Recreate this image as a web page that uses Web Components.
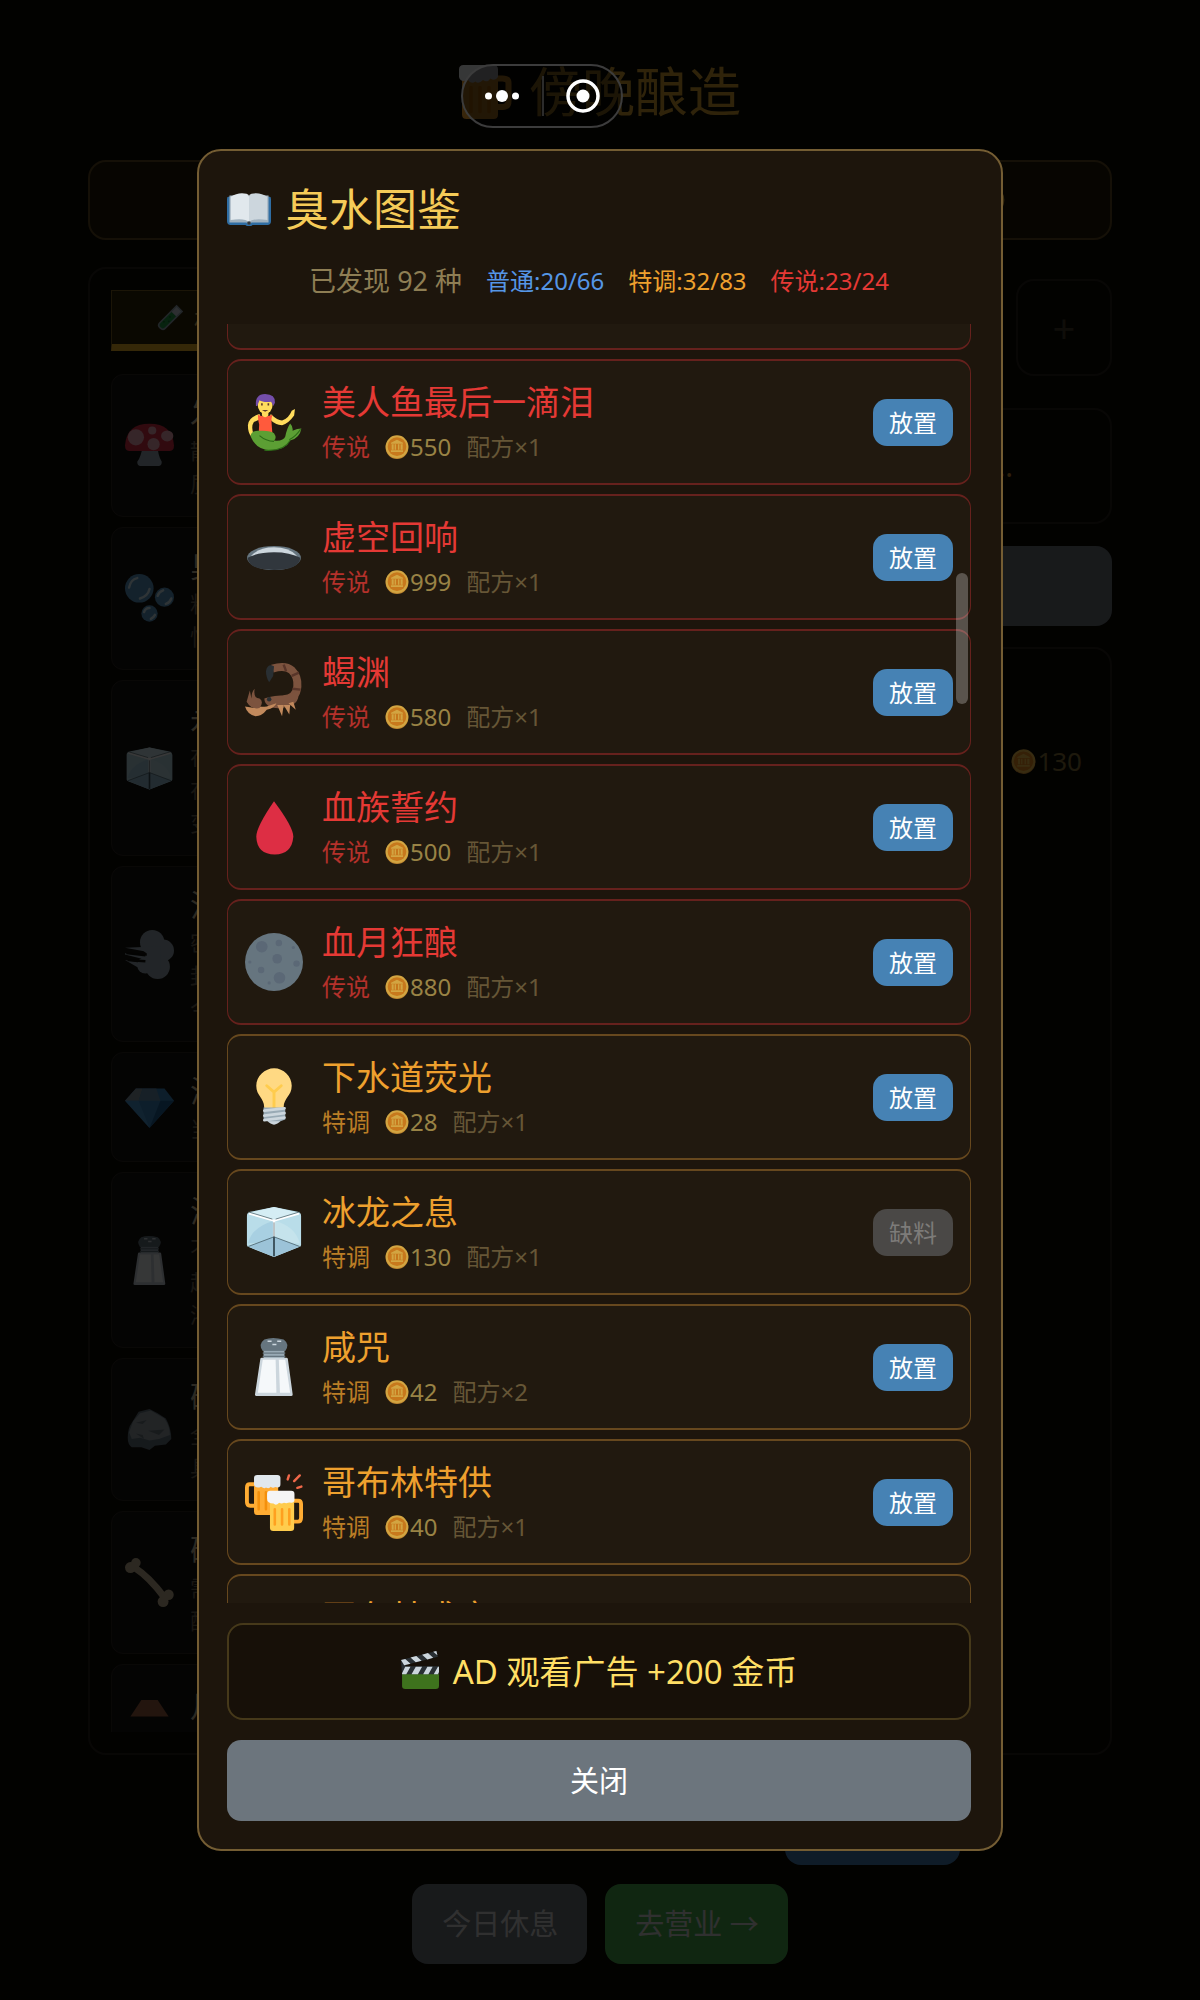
<!DOCTYPE html>
<html lang="zh-CN">
<head>
<meta charset="utf-8">
<meta name="viewport" content="width=device-width, initial-scale=1">
<title>傍晚酿造</title>
<style>
    body {
        margin: 0;
        background: #0c0904;
        color: #fff;
        font-family: "Noto Sans", "Noto Sans CJK SC", sans-serif;
    }
</style>
</head>
<body>
<brew-page></brew-page>
<modal-layer>
    <codex-dialog></codex-dialog>
</modal-layer>
<mini-capsule></mini-capsule>

<script>
// all icons share a 36x36 canvas
const ICONS = {
    book: `
        <path fill="#2f6da3" d="M1 8q-1 0-1 2v18q0 3 3 3h12q1 1 3 1t3-1h12q3 0 3-3V10q0-2-1-2z"/>
        <path fill="#9fb0bd" d="M2 7h32v22H20l-2 2-2-2H2z"/>
        <path fill="#e1e8ed" d="M3 8Q9 4 16 5.500 18 6 18 8v21q-3-4-15-2z"/>
        <path fill="#ccd6dd" d="M33 8Q27 4 20 5.500 18 6 18 8v21q3-4 15-2z"/>
        <circle fill="#31373d" cx="18" cy="29.500" r="1.500"/>`,
    coin: `
        <ellipse fill="#e8a33a" cx="18" cy="19" rx="17" ry="17"/>
        <ellipse fill="#ffc94f" cx="18" cy="17.500" rx="17" ry="17"/>
        <ellipse fill="#f19020" cx="18" cy="17.500" rx="14" ry="14"/>
        <path fill="#ffc94f" d="M18 7l9 4.500V13H9v-1.500zM10 14h3v8h-3zM14.500 14h2v8h-2zM19.500 14h2v8h-2zM23.500 14h3v8h-3zM9 23h18v2.500H9z"/>`,
    mermaid: `
        <path fill="#ffdc5d" d="M9 13Q2 15 1.800 20 1.800 25 4 27l1.500-1q-2-5 0-8L10 16zM16 13q4 4 7 4 4-1 6-6l2-1-.5 4Q27 19 23 20q-4 0-8-4z"/>
        <path fill="#ff5a3c" d="M8 13.500q4 2 9 0-1 3-.5 5.500l.5 6H8.500l.3-5.500Q8 17 8 13.500z"/>
        <path fill="#ffdc5d" d="M10.500 10h4v4q-2 2-4 0z"/>
        <ellipse fill="#ffdc5d" cx="12.500" cy="7.500" rx="4.600" ry="5.500"/>
        <path fill="#744eaa" d="M6.800 8Q6 .8 12.500.6 19 .8 18.600 6l-1 2-1.400-2.500Q11 6 9 4.500L7.600 8z"/>
        <path fill="#5d3b28" d="M10 6.300h1v1.500h-1zM14 6.300h1v1.500h-1zM10.500 10.600h4l-2 1z"/>
        <path fill="#5c9f34" d="M3.500 27q0-3.500 4.500-3.500 8-.5 10 1.500 2 3 0 4.500 6 .5 7-2.500Q26 22 28 19q2 2 1.500 4.500 3-1.500 5.500-1.500-1 6-7 7.500-3 6-12 6T3.500 27z"/>
        <path fill="none" stroke="#2d6b18" stroke-width=".7" d="M9 26.500q4 3.500 9 3.500M12 35.500q12 1 16-6M27.500 29q4-2 7-6.500"/>`,
    hole: `
        <ellipse fill="#66757f" cx="18" cy="18.600" rx="16.700" ry="7.500"/>
        <path fill="#ccd6dd" d="M4 17Q9 12 18 12t14 5v2H4z"/>
        <path fill="#31373d" d="M1.700 18.500Q8 15 18 15t16.300 3.500Q34 26 18 26T1.700 18.500z"/>`,
    scorpion: `
        <path fill="none" stroke="#7c533e" stroke-width="5" d="M17 3.500Q25 1 29 4.500q4 4 3.500 10Q32 22 24 22.500"/>
        <path fill="#7c533e" d="M12 22q6-2 14-2l7-3q1 5-2 8-9 5-16 2-3-2-3-5z"/>
        <path stroke="#583529" stroke-width="1.500" d="M24 1l1.500 4M29 8l4.500-2M29.500 16l5 .5"/>
        <path fill="#292f33" d="M13 5q1-5 5-3l-.5 6L15 12q-2-3-2-7z"/>
        <circle fill="#292f33" cx="15" cy="22.500" r="1.400"/>
        <path fill="#c1895c" d="M0 27l6 1q-4-2-4.500-4 5 4 12 3l6-2q-1 3-6 4-3 4-7 4-5-1-6.500-6zM20 26l4 0-1 7zM24 26l4 0-.5 6zM27 25l3-1 1.500 5z"/>
        <path fill="#7c533e" d="M1 24q2-7 2-7l1 5q0-4 2-6-1 6 3 6 3 2 0 6-5 1-8-4z"/>`,
    drop: `<path fill="#dd2e44" d="M18 2q12 16 12 22Q29 35 18.500 35 7.500 35 7 24 7 18 18 2z"/>`,
    moon: `
        <circle fill="#66757f" cx="18" cy="18" r="18"/>
        <g fill="#5b6876"><circle cx="10.400" cy="8.500" r="3.600"/><circle cx="21" cy="6.200" r="2"/><circle cx="30" cy="9" r="1"/>
        <circle cx="20" cy="16" r="3"/><circle cx="32" cy="19" r="2"/><circle cx="3" cy="18" r="1"/><circle cx="10" cy="23" r="2"/>
        <circle cx="21.400" cy="27.800" r="3.600"/><circle cx="15" cy="31" r="1"/></g>`,
    bulb: `
        <path fill="#ffd983" d="M29 11.060c0 6.440-5 7.440-5 13.440 0 3.100-3.120 3.360-5.500 3.360-2.050 0-6.590-.78-6.590-3.360C11.910 18.500 7 17.500 7 11.060 7 5.030 12.280.14 18.080.14 23.880.14 29 5.030 29 11.060z"/>
        <path fill="none" stroke="#ffcc4d" stroke-width="1.800" stroke-linecap="round" d="M13.500 11l4.500 4 4.500-4M18 15v11"/>
        <path fill="#ccd6dd" d="M22.500 32.500Q20 35.200 18 35.200T13.500 32.500z"/>
        <path fill="#99aab5" d="M11.500 24.500h13.500v7.500l-3 1H14l-2.500-1.500z"/>
        <path stroke="#ccd6dd" stroke-width="1.700" stroke-linecap="round" d="M12 26.500l12.500-1.500M12 29.500l12.500-1.500M12 32.300l12.500-1.500"/>`,
    ice: `
        <path fill="#b9dde9" d="M1.200 8q0-2 2-2.500L18 2.500l14.800 3q2 .5 2 2.500v18q0 1-1.500 1.500L18 33.500 2.700 27.500Q1.200 27 1.200 26z"/>
        <path fill="#d5edf4" d="M3 6l15-3.500L33 6 18 10.500z"/>
        <path fill="#a8d0e2" d="M2 25Q4 15 18 11v13z"/>
        <path fill="#c5e3ec" d="M18 11q13 3 16 14L18 24z"/>
        <path fill="#9cc3d8" d="M2 27l16-6 16 6-16 6.500z"/>
        <path fill="none" stroke="#fff" stroke-width="1.300" d="M2.500 6.500L18 11l15.500-4.500M18 11v10"/>
        <path fill="none" stroke="#31474f" stroke-width=".4" d="M2 5.500L17 10M19 10l15-4.500M18 12v9M2 27l16-6 16 6"/>
        <path stroke="#3d535e" stroke-width="1.200" d="M18 21v12"/>`,
    salt: `
        <path fill="#66757f" d="M11 8q-3-4 1-7 5-2 12 0 4 3 1 7z"/>
        <path fill="#ccd6dd" d="M14 1.500h2.500v1H14zM20 1.500h2.500v1H20zM17 3.500h2.500v1H17z"/>
        <path fill="#99aab5" d="M11.500 8h13v4.500h-13z"/><path fill="#66757f" d="M11 9h14v.8H11zM11 11h14v.8H11z"/>
        <path fill="#ccd6dd" d="M9.500 13q0-.8 1-.8h15.200q.8 0 .9.8l3 22q0 1-1 1H7.200q-1 0-1-1z"/>
        <path fill="#f5f8fa" d="M11 13.500h8l.5 20.500H8z"/><path fill="#f5f8fa" d="M21 13.500h4l3 20.500h-6.300z"/>`,
    beers: `
        <path fill="none" stroke="#ffac33" stroke-width="2.400" d="M6 7H3Q1.200 7 1.200 9v9q0 2.300 2 2.300H6"/>
        <path fill="#ffac33" d="M5.600 6h15v20H7.500q-1.900 0-1.900-2z"/>
        <path stroke="#f4900c" stroke-width="1.600" stroke-linecap="round" d="M8.500 12v10.500M13 12v10.500"/>
        <path fill="#e1e8ed" d="M5.600 3q0-1.800 2-1.800h12.500Q22 1.200 22 3v4q0 2-2 2-1-.5-2 0t-2-.5q-1 1.500-3 .5-1 1-3-.5-3 1.500-4.400-1z"/>
        <path fill="none" stroke="#ffac33" stroke-width="2.400" d="M30 17.200h3q1.800 0 1.800 2v8.500q0 2.500-2 2.500H30"/>
        <path fill="#ffcc4d" d="M15.500 16h15v18q0 2-2 2h-11q-2 0-2-2z"/>
        <path stroke="#ffa01f" stroke-width="1.600" stroke-linecap="round" d="M18.500 22.500V32M23 22.500V32M27.500 22.500V32"/>
        <path fill="#f5f5f5" d="M13.700 13q0-2 2-2h13q2 0 2 2v3.500q0 2-2 2-1-.5-2 0t-2.500 0q-1.500 1-3 0-2 2-3.500.5-4 0-4-3z"/>
        <path stroke="#f0684a" stroke-width="1.500" stroke-linecap="round" d="M26.500 4l.8-2.500M30.500 5l3.500-3.500M32.500 9.200l2.500-.8"/>`,
    clapper: `
        <path fill="#3e721d" d="M1 21h35v12q0 3-3 3H4q-3 0-3-3z"/>
        <path fill="#292f33" d="M0 9l5 5.500h31V22H1z"/>
        <path fill="#ccd6dd" d="M4 15h5l-4 7H1v-1zM14 15h6l-4 7h-6zM25 15h5l-4 7h-5zM35 15h1v5l-1 2h-4z"/>
        <path fill="#292f33" d="M0 8.500L33.500 0 35 5.500 1.500 14z"/>
        <path fill="#ccd6dd" d="M0 8.500l4-1L9 12l-6 1.500zM9 6.200l5.500-1.400 5 4.500L14 10.700zM20 3.500L25.500 2l5 4.500L25 8zM30.500.8L33.500 0l1 4z"/>`,
    beer: `
        <path fill="none" stroke="#ffac33" stroke-width="4" d="M24 9h5q4 0 4 3v12q0 4-4 4h-5"/>
        <path fill="#ffac33" d="M2 7h24v26q0 3-3 3H5q-3 0-3-3z"/>
        <path stroke="#f4900c" stroke-width="2.500" stroke-linecap="round" d="M8 15v16M14 15v16M20 15v16"/>
        <path fill="#f5f8fa" d="M0 3q0-3 3-3h20q3 0 3 3v5q-2 3-5 1-2 3-5 1-3 3-5 1-3 2-5-1-5 2-6-2z"/>`,
    tube: `
        <g transform="rotate(45 18 18)"><path fill="#99aab5" d="M12 0h12v32q0 5-6 5t-6-5z"/>
        <path fill="#ccd6dd" d="M14 2h8v9h-8z"/><path fill="#21a045" d="M14 11h8v20q0 4-4 4t-4-4z"/>
        <path fill="#156b2c" d="M16 16h2v2h-2zM19 21h2v2h-2zM15 26h2v2h-2z"/></g>`,
    mushroom: `
        <path fill="#99aab5" d="M13 18h11q0 7 3 12 0 3-2 3H11q-2 0-2-3 3-4 4-12z"/>
        <path fill="#dd2e44" d="M0 18Q1 2 18 2t18 16q0 4-3 4H3q-3 0-3-4z"/>
        <g fill="#f4abba"><ellipse cx="8" cy="12" rx="6" ry="6"/><circle cx="20" cy="7" r="3"/><circle cx="21" cy="17" r="4.500"/><ellipse cx="31" cy="11" rx="4.500" ry="4"/></g>`,
    bubbles: `
        <g fill="#5a9bc7"><circle cx="10.500" cy="10.500" r="10.500"/><circle cx="29" cy="17" r="7"/><circle cx="18" cy="29" r="6"/></g>
        <g fill="none" stroke="#d4ecf7" stroke-width="1.800" stroke-linecap="round"><path d="M3 10q1-6 6-7M18 11q-1 5-7 7M24 16q1-3 4-4M34 18q-1 3-4 4M14 28q1-3 4-3M22 30q-1 2-3 3"/></g>`,
    wind: `
        <g fill="#99aab5"><circle cx="20" cy="9" r="9"/><circle cx="28" cy="15" r="8"/><circle cx="24" cy="27" r="9"/><circle cx="15" cy="26" r="6"/><path d="M0 13l16 3v3L0 17v1l16 4v3L0 22l12 7h14V12z"/></g>
        <path stroke="#11100c" stroke-width="1.800" d="M1 17l14 1.500M2 22l13 1"/>`,
    gem: `
        <path fill="#3b88c3" d="M8 4h21l7 9-18 20L0 13z"/>
        <path fill="#8899a6" d="M8 4h5l-3 9H0z"/><path fill="#6a93b0" d="M13 4h10l3 9H10z"/>
        <path fill="#5dadec" opacity=".5" d="M0 13h10l8 20z"/><path fill="#226699" d="M26 13h10L18 33z"/>`,
    rock: `
        <path fill="#66757f" d="M2 24q0-7 3-11l5-8 8-2 6 3 6 4q4 7 4 15l-4 4-8 1-4 3-6-2H5q-3-2-3-7z"/>
        <path fill="#99a3aa" d="M3 20l3-8 5-6 8-2 5 3 5 3q4 6 4 12l-8 3-7 1-7-2-6 1z"/>
        <path fill="#6f7a82" d="M8 13l8-2-3 3zM17 19l12-1-4 4zM8 21l5 1 1 3z"/>`,
    bone: `
        <path fill="none" stroke="#c8b896" stroke-width="5" d="M7 7q11 7 22 22"/>
        <g fill="#c8b896"><circle cx="4" cy="7" r="4"/><circle cx="8" cy="3.500" r="3.500"/><circle cx="28" cy="32" r="4"/><circle cx="32" cy="27" r="3.800"/></g>`,
    bowl: `<path fill="#a0623f" d="M12 14h12l8 12H4z"/>`
}

class EmojiIcon extends HTMLElement {
    connectedCallback() {
        if (this.shadowRoot) return
        this.attachShadow({ mode: 'open' })
        this.shadowRoot.innerHTML = `
            <style>
            :host { display: inline-flex; flex: none; width: 58px; height: 58px; }
            svg { width: 100%; height: 100%; overflow: visible; }
            </style>
            <svg viewBox="0 0 36 36" aria-hidden="true">${ICONS[this.getAttribute("name")]}</svg>
        `
    }
}
customElements.define('emoji-icon', EmojiIcon)

// defined before the dialog, the list needs its final height to scroll
class ModalLayer extends HTMLElement {
    constructor() {
        super()
        this.attachShadow({ mode: 'open' })
        this.shadowRoot.innerHTML = `
            <style>
            :host {
                position: fixed;
                inset: 0;
                display: flex;
                justify-content: center;
                box-sizing: border-box;
                padding: 149px 24px;
                background: rgba(0, 0, 0, 0.78);
            }
            </style>
            <slot></slot>
        `
    }
}
customElements.define('modal-layer', ModalLayer)

// one discovered drink in the codex
class RecipeCard extends HTMLElement {
    set data(value) {
        const ready = !value.missing
        this.attachShadow({ mode: 'open' })
        this.shadowRoot.innerHTML = `
            <style>
            :host {
                display: flex;
                flex: none;
                align-items: center;
                gap: 19px;
                box-sizing: border-box;
                height: 126px;
                padding: 0 17px;
                border: solid var(--line);
                border-width: 2px 1px;
                border-radius: 14px;
                background: #21190f;
            }
            :host(.legend) { --line: #66211d; --main: #e53935; }
            :host(.special) { --line: #67481e; --main: #eea02e; }
            .info { flex: 1; min-width: 0; }
            .name {
                margin: 0 0 4px;
                font-size: 34px;
                font-weight: 400;
                line-height: 46px;
                color: var(--main);
            }
            .meta {
                display: flex;
                gap: 15px;
                font-size: 24px;
                line-height: 36px;
                color: #665636;
            }
            .tier { color: var(--main); opacity: 0.75; }
            .price { display: flex; align-items: center; gap: 1px; color: #998345; }
            .price emoji-icon { width: 24px; height: 24px; opacity: 0.8; }
            button {
                width: 80px;
                height: 47px;
                padding: 0;
                border: 0;
                border-radius: 14px;
                background: #4682b4;
                color: #fff;
                font: 24px/47px "Noto Sans", "Noto Sans CJK SC", sans-serif;
            }
            button:disabled { background: #4a4846; color: #7d7b79; }
            </style>
            <emoji-icon name="${value.icon}"></emoji-icon>
            <div class="info">
                <h3 class="name">${value.name}</h3>
                <div class="meta">
                    <span class="tier">${value.tier === "legend" ? "传说" : "特调"}</span>
                    <span class="price"><emoji-icon name="coin"></emoji-icon>${value.price}</span>
                    <span>配方×${value.count}</span>
                </div>
            </div>
            <button type="button" ${ready ? "" : "disabled"}>${ready ? "放置" : "缺料"}</button>
        `
        this.classList.add(value.tier)
    }
}
customElements.define('recipe-card', RecipeCard)

const RECIPES = [
    { icon: "drop", name: "精灵之泪", tier: "legend", price: 550, count: 1 },
    { icon: "mermaid", name: "美人鱼最后一滴泪", tier: "legend", price: 550, count: 1 },
    { icon: "hole", name: "虚空回响", tier: "legend", price: 999, count: 1 },
    { icon: "scorpion", name: "蝎渊", tier: "legend", price: 580, count: 1 },
    { icon: "drop", name: "血族誓约", tier: "legend", price: 500, count: 1 },
    { icon: "moon", name: "血月狂酿", tier: "legend", price: 880, count: 1 },
    { icon: "bulb", name: "下水道荧光", tier: "special", price: 28, count: 1 },
    { icon: "ice", name: "冰龙之息", tier: "special", price: 130, count: 1, missing: true },
    { icon: "salt", name: "咸咒", tier: "special", price: 42, count: 2 },
    { icon: "beers", name: "哥布林特供", tier: "special", price: 40, count: 1 },
    { icon: "beers", name: "哥布林盛宴", tier: "special", price: 45, count: 1 }
]

class CodexDialog extends HTMLElement {
    constructor() {
        super()
        this.attachShadow({ mode: 'open' })
        this.shadowRoot.innerHTML = `
            <style>
            :host {
                display: flex;
                flex-direction: column;
                box-sizing: border-box;
                width: 100%;
                max-width: 806px;
                padding: 28px 30px 28px 28px;
                border: 2px solid #745d33;
                border-radius: 24px;
                background: #1d150c;
            }
            h2 {
                display: flex;
                align-items: center;
                gap: 14px;
                margin: 0 0 24px;
                font-size: 44px;
                font-weight: 400;
                line-height: 60px;
                color: #f5cb58;
            }
            h2 emoji-icon { width: 44px; height: 44px; }
            .stats {
                display: flex;
                justify-content: center;
                align-items: center;
                gap: 24px;
                margin-bottom: 25px;
                font-size: 24px;
                line-height: 36px;
            }
            .total { font-size: 27px; color: #8e7e54; }
            .common { color: #5596e6; }
            .special { color: #eea02e; }
            .legend { color: #e53935; }
            .scroller {
                position: relative;
                display: flex;
                flex: 1;
                min-height: 0;
            }
            #list {
                display: flex;
                flex: 1;
                flex-direction: column;
                gap: 9px;
                overflow-y: auto;
                scrollbar-width: none;
            }
            .thumb {
                position: absolute;
                top: 249px;
                right: 3px;
                width: 12px;
                height: 131px;
                border-radius: 6px;
                background: rgba(255, 255, 255, 0.26);
            }
            button {
                flex: none;
                margin-top: 20px;
                border: 0;
                border-radius: 14px;
                font-family: inherit;
            }
            .ad {
                display: flex;
                justify-content: center;
                align-items: center;
                gap: 14px;
                height: 97px;
                padding: 0 6px 4px;
                border: 2px solid #46391a;
                border-radius: 16px;
                background: #171008;
                color: #ffdf65;
                font-size: 33px;
            }
            .ad emoji-icon { width: 38px; height: 38px; }
            .close {
                height: 81px;
                padding: 0 6px 4px;
                background: #6c757d;
                color: #fff;
                font-size: 29px;
            }
            </style>
            <h2><emoji-icon name="book"></emoji-icon>臭水图鉴</h2>
            <div class="stats">
                <span class="total">已发现 92 种</span>
                <span class="common">普通:20/66</span>
                <span class="special">特调:32/83</span>
                <span class="legend">传说:23/24</span>
            </div>
            <div class="scroller">
                <div id="list"></div>
                <div class="thumb"></div>
            </div>
            <button type="button" class="ad"><emoji-icon name="clapper"></emoji-icon>AD 观看广告 +200 金币</button>
            <button type="button" class="close">关闭</button>
        `
    }

    connectedCallback() {
        const list = this.shadowRoot.getElementById("list")
        RECIPES.forEach(recipe => {
            const card = new RecipeCard()
            card.data = recipe
            list.appendChild(card)
        })
        list.scrollTop = 100
    }
}
customElements.define('codex-dialog', CodexDialog)

// menu capsule of the host app, floats over everything
class MiniCapsule extends HTMLElement {
    constructor() {
        super()
        this.attachShadow({ mode: 'open' })
        this.shadowRoot.innerHTML = `
            <style>
            :host {
                position: fixed;
                top: 64px;
                left: calc(50% - 139px);
                display: flex;
                box-sizing: border-box;
                width: 162px;
                height: 64px;
                border: 2px solid #3c3c3c;
                border-radius: 32px;
                background: rgba(0, 0, 0, 0.4);
            }
            button { flex: 1; padding: 0 2px 0 0; border: 0; background: none; }
            button + button { height: 40px; margin-top: 10px; padding: 0; border-left: 2px solid #2c2c2c; }
            svg { display: block; margin: auto; }
            </style>
            <button type="button" aria-label="更多"><svg width="36" height="36" fill="#fff"><circle cx="4.500" cy="18" r="3.500"/><circle cx="18" cy="18" r="6"/><circle cx="31.500" cy="18" r="3.500"/></svg></button>
            <button type="button" aria-label="退出"><svg width="36" height="36" fill="#fff"><circle cx="18" cy="18" r="15" fill="none" stroke="#fff" stroke-width="3.500"/><circle cx="18" cy="18" r="6.500"/></svg></button>
        `
    }
}
customElements.define('mini-capsule', MiniCapsule)

class IngredientCard extends HTMLElement {
    set data(value) {
        this.attachShadow({ mode: 'open' })
        this.shadowRoot.innerHTML = `
            <style>
            :host {
                display: flex;
                flex: none;
                align-items: center;
                gap: 16px;
                padding: 16px 13px;
                border: 1px solid #2b271f;
                border-radius: 12px;
                background: #161310;
                white-space: nowrap;
            }
            emoji-icon { width: 49px; height: 49px; }
            .name { font-size: 30px; line-height: 43px; color: #c9bc9c; }
            .line { font-size: 22px; line-height: 33px; color: #6b6354; }
            </style>
            <emoji-icon name="${value[0]}"></emoji-icon>
            <div>
                <div class="name">${value[1]}</div>
                ${value[2].map(line => `<div class="line">${line}</div>`).join("")}
            </div>
        `
    }
}
customElements.define('ingredient-card', IngredientCard)

const INGREDIENTS = [
    ["mushroom", "发光菇", ["散发", "质地"]],
    ["bubbles", "臭泡", ["粘稠", "恒温"]],
    ["ice", "永冻冰", ["在", "在", "变"]],
    ["wind", "沼气", ["密", "封", "今"]],
    ["gem", "海钻", ["当"]],
    ["salt", "海盐", ["不", "起", "浓"]],
    ["rock", "矿石", ["全", "具"]],
    ["bone", "硬骨", ["需", "配"]],
    ["bowl", "月", ["", ""]]
]

// the brewing screen under the dialog
class BrewPage extends HTMLElement {
    constructor() {
        super()
        this.attachShadow({ mode: 'open' })
        this.shadowRoot.innerHTML = `
            <style>
            :host {
                display: flex;
                flex-direction: column;
                box-sizing: border-box;
                height: 100vh;
                padding: 56px 88px 36px;
            }
            h1 {
                display: flex;
                justify-content: center;
                align-items: center;
                gap: 16px;
                margin: 0 0 32px;
                font-size: 53px;
                font-weight: 400;
                line-height: 72px;
                color: #d4a030;
            }
            h1 emoji-icon { width: 54px; height: 54px; }
            .box {
                box-sizing: border-box;
                border: 2px solid #26221a;
                border-radius: 18px;
            }
            .status {
                display: flex;
                justify-content: flex-end;
                align-items: center;
                height: 80px;
                padding-right: 105px;
                border-color: #5f4a20;
                background: #211a08;
            }
            .status emoji-icon { width: 28px; height: 28px; }
            main {
                display: grid;
                flex: 1;
                grid-template-columns: 1fr 1fr;
                gap: 14px;
                min-height: 0;
                margin: 27px 0 30px;
            }
            .left {
                display: flex;
                flex-direction: column;
                min-height: 0;
                padding: 21px;
            }
            .tab {
                display: flex;
                flex: none;
                align-items: center;
                gap: 10px;
                width: 160px;
                height: 61px;
                margin-bottom: 23px;
                padding: 0 0 0 44px;
                border: 1px solid #7a6020;
                border-bottom: 7px solid #f0b428;
                background: #2e2408;
                color: #d4b060;
                font: 24px "Noto Sans", "Noto Sans CJK SC", sans-serif;
            }
            .tab emoji-icon { width: 28px; height: 28px; }
            #stock {
                display: flex;
                flex: 1;
                flex-direction: column;
                gap: 10px;
                overflow: hidden;
            }
            .right { display: flex; flex-direction: column; min-height: 0; padding-top: 12px; }
            .plus { align-self: flex-end; width: 96px; height: 97px; margin-bottom: 32px; padding: 0; background: none; color: #443c2a; font: 40px "Noto Sans", sans-serif; }
            .hint { height: 116px; margin-bottom: 22px; padding: 38px 97px 0 0; text-align: right; color: #d0913a; font-size: 29px; line-height: 36px; }
            .wide { flex: none; height: 80px; margin-bottom: 21px; border: 0; border-radius: 16px; background: #6c757d; }
            .made { flex: 1; padding: 92px 28px 0; }
            .price { display: flex; justify-content: flex-end; align-items: center; gap: 1px; font-size: 26px; line-height: 40px; color: #87733a; }
            .price emoji-icon { width: 25px; height: 25px; }
            .actions { display: flex; justify-content: center; gap: 18px; }
            .brew { justify-content: flex-end; width: 720px; margin: 0 auto 19px; }
            .actions button {
                height: 80px;
                padding: 0 29px 4px 30px;
                border: 0;
                border-radius: 16px;
                color: #dcdcdc;
                font: 29px "Noto Sans", "Noto Sans CJK SC", sans-serif;
            }
            .blue { background: #4682b4; }
            .gray { background: #6c757d; }
            .green { background: #4caf50; }
            </style>
            <h1><emoji-icon name="beer"></emoji-icon>傍晚酿造</h1>
            <div class="box status"><emoji-icon name="coin"></emoji-icon></div>
            <main>
                <section class="box left">
                    <button type="button" class="tab"><emoji-icon name="tube"></emoji-icon>材料</button>
                    <div id="stock"></div>
                </section>
                <section class="right">
                    <button type="button" class="box plus">+</button>
                    <div class="box hint">...</div>
                    <button type="button" class="wide" aria-label="清空"></button>
                    <div class="box made"><div class="price"><emoji-icon name="coin"></emoji-icon>130</div></div>
                </section>
            </main>
            <div class="actions brew"><button type="button" class="blue">开始酿造</button></div>
            <div class="actions">
                <button type="button" class="gray">今日休息</button>
                <button type="button" class="green">去营业 →</button>
            </div>
        `
    }

    connectedCallback() {
        const stock = this.shadowRoot.getElementById("stock")
        INGREDIENTS.forEach(item => {
            const card = new IngredientCard()
            card.data = item
            stock.appendChild(card)
        })
    }
}
customElements.define('brew-page', BrewPage)
</script>
</body>
</html>
